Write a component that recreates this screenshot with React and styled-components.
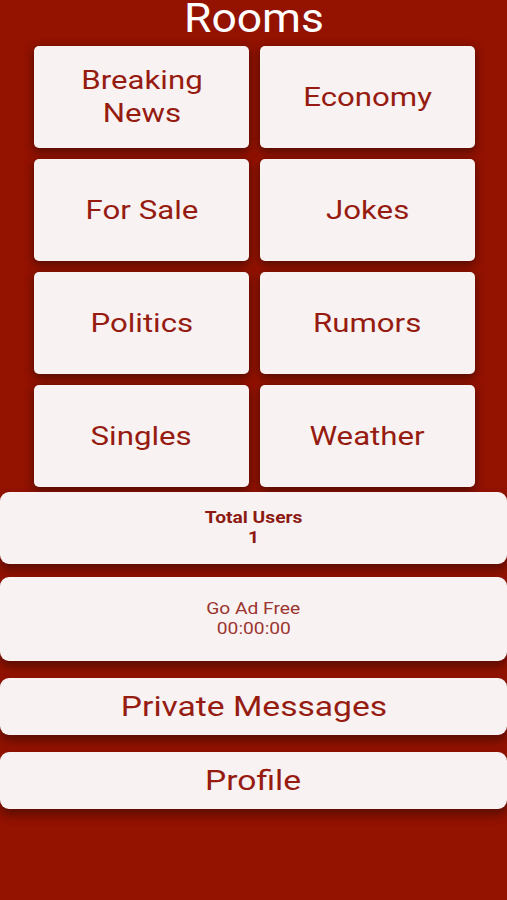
import React from "react";
import styled, { createGlobalStyle } from "styled-components";

const GlobalStyle = createGlobalStyle`
  html, body {
    margin: 0;
    padding: 0;
    background-color: #931200;
  }
  * {
    box-sizing: border-box;
  }
`;

const Screen = styled.div`
  width: 507px;
  min-height: 900px;
  background-color: #931200;
  font-family: Roboto, "Liberation Sans", sans-serif;
  display: flex;
  flex-direction: column;
`;

const Title = styled.h1`
  margin: 0 0 9px;
  font-size: 40px;
  line-height: 37px;
  font-weight: 400;
  color: #ffffff;
  text-align: center;
`;

// the screen text is drawn a little wider than plain Roboto
const Wide = styled.span`
  display: inline-block;
  max-width: ${(p) => p.$max || "none"};
  transform: scaleX(${(p) => p.$stretch || 1.2});
`;

const RoomGrid = styled.div`
  display: grid;
  grid-template-columns: 1fr 1fr;
  grid-auto-rows: 102px;
  gap: 11px;
  padding: 0 32px 0 34px;
`;

const RoomTile = styled.button`
  border: none;
  border-radius: 5px;
  background-color: #f8f2f2;
  color: #961b11;
  font-family: inherit;
  font-size: 26px;
  line-height: 33px;
  padding: 0;
  box-shadow: 0 3px 10px rgba(35, 10, 5, 0.65);
  cursor: pointer;
`;

const Panel = styled.div`
  margin-top: ${(p) => p.$gap}px;
  height: ${(p) => p.$height}px;
  border-radius: 9px;
  background-color: #f8f2f2;
  display: flex;
  flex-direction: column;
  align-items: center;
  justify-content: center;
  box-shadow: 0 6px 10px rgba(40, 10, 5, 0.5);
  text-align: center;
`;

const StatText = styled.div`
  font-size: 16px;
  line-height: 20px;
  font-weight: ${(p) => (p.$bold ? 700 : 400)};
  color: ${(p) => (p.$bold ? "#8c1a12" : "#9b3530")};
`;

const NavText = styled.div`
  font-size: 28px;
  color: #961b11;
`;

const rooms = [
  "Breaking News",
  "Economy",
  "For Sale",
  "Jokes",
  "Politics",
  "Rumors",
  "Singles",
  "Weather",
];

const App = () => {
  return (
    <Screen>
      <GlobalStyle />
      <Title>
        <Wide $stretch={1.11}>Rooms</Wide>
      </Title>
      <RoomGrid>
        {rooms.map((room) => (
          <RoomTile key={room}>
            <Wide $max="150px">{room}</Wide>
          </RoomTile>
        ))}
      </RoomGrid>
      <Panel $gap={5} $height={72}>
        <StatText $bold>
          <Wide>Total Users</Wide>
        </StatText>
        <StatText $bold>
          <Wide>1</Wide>
        </StatText>
      </Panel>
      <Panel $gap={13} $height={84}>
        <StatText>
          <Wide>Go Ad Free</Wide>
        </StatText>
        <StatText>
          <Wide>00:00:00</Wide>
        </StatText>
      </Panel>
      <Panel $gap={17} $height={57}>
        <NavText>
          <Wide>Private Messages</Wide>
        </NavText>
      </Panel>
      <Panel $gap={17} $height={57}>
        <NavText>
          <Wide>Profile</Wide>
        </NavText>
      </Panel>
    </Screen>
  );
};

export default App;
